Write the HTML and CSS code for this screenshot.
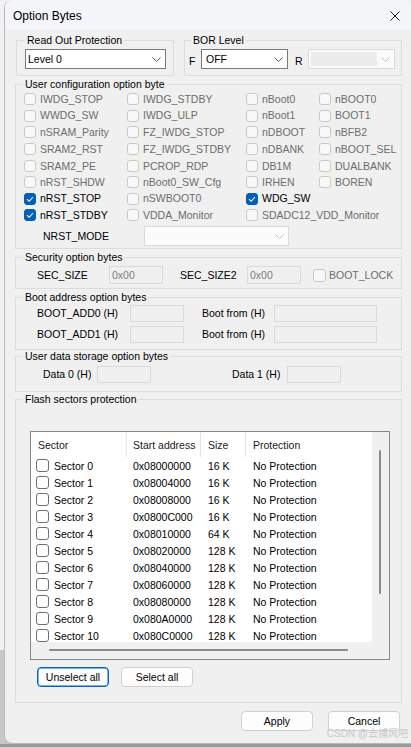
FILE: index.html
```html
<!DOCTYPE html>
<html>
<head>
<meta charset="utf-8">
<link rel="stylesheet" href="styles.css">
</head>
<body>
<div class="dialog">
  <div class="titlebar">
    <span class="title">Option Bytes</span>
    <svg class="close" width="10" height="10" viewBox="0 0 10 10"><path d="M0.5 0.5L9.5 9.5M9.5 0.5L0.5 9.5" stroke="#1b1b1b" stroke-width="1" fill="none"/></svg>
  </div>
  <div class="content">
    <div class="toprow">
      <div class="group rop">
        <div class="legend lg-rop">Read Out Protection</div>
        <div class="combo combo-rop"><span class="ctext">Level 0</span><svg width="9" height="5" viewBox="0 0 9 5"><polyline points="0.5,0.5 4.5,4.5 8.5,0.5" fill="none" stroke="#5f5f5f"/></svg></div>
      </div>
      <div class="group bor">
        <div class="legend lg-bor">BOR Level</div>
        <div class="bor-row">
          <span class="blabel bl-f">F</span>
          <div class="combo combo-bor"><span class="ctext ctext-off">OFF</span><svg width="9" height="5" viewBox="0 0 9 5"><polyline points="0.5,0.5 4.5,4.5 8.5,0.5" fill="none" stroke="#5f5f5f"/></svg></div>
          <span class="blabel bl-r">R</span>
          <div class="combo combo-dis"><span class="dis-inner"></span><svg width="9" height="5" viewBox="0 0 9 5"><polyline points="0.5,0.5 4.5,4.5 8.5,0.5" fill="none" stroke="#c2c2c2"/></svg></div>
        </div>
      </div>
    </div>

    <div class="group ucfg">
      <div class="legend lg">User configuration option byte</div>
      <div class="cfg-grid">
        <div class="item dis"><span class="cb"></span>IWDG_STOP</div>
        <div class="item dis"><span class="cb"></span>IWDG_STDBY</div>
        <div class="item dis"><span class="cb"></span>nBoot0</div>
        <div class="item dis"><span class="cb"></span>nBOOT0</div>

        <div class="item dis"><span class="cb"></span>WWDG_SW</div>
        <div class="item dis"><span class="cb"></span>IWDG_ULP</div>
        <div class="item dis"><span class="cb"></span>nBoot1</div>
        <div class="item dis"><span class="cb"></span>BOOT1</div>

        <div class="item dis"><span class="cb"></span>nSRAM_Parity</div>
        <div class="item dis"><span class="cb"></span>FZ_IWDG_STOP</div>
        <div class="item dis"><span class="cb"></span>nDBOOT</div>
        <div class="item dis"><span class="cb"></span>nBFB2</div>

        <div class="item dis"><span class="cb"></span>SRAM2_RST</div>
        <div class="item dis"><span class="cb"></span>FZ_IWDG_STDBY</div>
        <div class="item dis"><span class="cb"></span>nDBANK</div>
        <div class="item dis"><span class="cb"></span>nBOOT_SEL</div>

        <div class="item dis"><span class="cb"></span>SRAM2_PE</div>
        <div class="item dis"><span class="cb"></span>PCROP_RDP</div>
        <div class="item dis"><span class="cb"></span>DB1M</div>
        <div class="item dis"><span class="cb"></span>DUALBANK</div>

        <div class="item dis"><span class="cb"></span>nRST_SHDW</div>
        <div class="item dis"><span class="cb"></span>nBoot0_SW_Cfg</div>
        <div class="item dis"><span class="cb"></span>IRHEN</div>
        <div class="item dis"><span class="cb"></span>BOREN</div>

        <div class="item"><span class="cb on"><svg width="10" height="10" viewBox="0 0 10 10"><polyline points="2,5.2 4.2,7.3 8,3" fill="none" stroke="#fff" stroke-width="1.1"/></svg></span>nRST_STOP</div>
        <div class="item dis"><span class="cb"></span>nSWBOOT0</div>
        <div class="item"><span class="cb on"><svg width="10" height="10" viewBox="0 0 10 10"><polyline points="2,5.2 4.2,7.3 8,3" fill="none" stroke="#fff" stroke-width="1.1"/></svg></span>WDG_SW</div>
        <div class="item"></div>

        <div class="item"><span class="cb on"><svg width="10" height="10" viewBox="0 0 10 10"><polyline points="2,5.2 4.2,7.3 8,3" fill="none" stroke="#fff" stroke-width="1.1"/></svg></span>nRST_STDBY</div>
        <div class="item dis"><span class="cb"></span>VDDA_Monitor</div>
        <div class="item dis"><span class="cb"></span>SDADC12_VDD_Monitor</div>
        <div class="item"></div>
      </div>
      <div class="nrst-row">
        <span class="nrst-label">NRST_MODE</span>
        <div class="combo combo-nrst"><span></span><svg width="9" height="5" viewBox="0 0 9 5"><polyline points="0.5,0.5 4.5,4.5 8.5,0.5" fill="none" stroke="#c2c2c2"/></svg></div>
      </div>
    </div>

    <div class="group sec">
      <div class="legend lg">Security option bytes</div>
      <div class="row sec-row">
        <span class="lbl l-secsize">SEC_SIZE</span>
        <span class="field f54">0x00</span>
        <span class="lbl l-secsize2">SEC_SIZE2</span>
        <span class="field f54">0x00</span>
        <span class="cb cb-lock"></span><span class="dis-text">BOOT_LOCK</span>
      </div>
    </div>

    <div class="group boot">
      <div class="legend lg">Boot address option bytes</div>
      <div class="row boot-row first">
        <span class="lbl l-bootadd">BOOT_ADD0 (H)</span>
        <span class="field f54"></span>
        <span class="lbl l-bootfrom">Boot from (H)</span>
        <span class="field f103"></span>
      </div>
      <div class="row boot-row second">
        <span class="lbl l-bootadd">BOOT_ADD1 (H)</span>
        <span class="field f54"></span>
        <span class="lbl l-bootfrom">Boot from (H)</span>
        <span class="field f103"></span>
      </div>
    </div>

    <div class="group udata">
      <div class="legend lg">User data storage option bytes</div>
      <div class="row udata-row">
        <span class="lbl l-data0">Data 0 (H)</span>
        <span class="field f54"></span>
        <span class="lbl l-data1">Data 1 (H)</span>
        <span class="field f54"></span>
      </div>
    </div>

    <div class="group flash">
      <div class="legend lg">Flash sectors protection</div>
      <div class="list">
        <div class="lv-body">
          <div class="lv-head">
            <span class="hc c1">Sector</span>
            <span class="hc c2">Start address</span>
            <span class="hc c3">Size</span>
            <span class="hc c4">Protection</span>
          </div>
          <div class="lv-row"><span class="c1"><span class="rcb"></span>Sector 0</span><span class="c2">0x08000000</span><span class="c3">16 K</span><span class="c4">No Protection</span></div>
          <div class="lv-row"><span class="c1"><span class="rcb"></span>Sector 1</span><span class="c2">0x08004000</span><span class="c3">16 K</span><span class="c4">No Protection</span></div>
          <div class="lv-row"><span class="c1"><span class="rcb"></span>Sector 2</span><span class="c2">0x08008000</span><span class="c3">16 K</span><span class="c4">No Protection</span></div>
          <div class="lv-row"><span class="c1"><span class="rcb"></span>Sector 3</span><span class="c2">0x0800C000</span><span class="c3">16 K</span><span class="c4">No Protection</span></div>
          <div class="lv-row"><span class="c1"><span class="rcb"></span>Sector 4</span><span class="c2">0x08010000</span><span class="c3">64 K</span><span class="c4">No Protection</span></div>
          <div class="lv-row"><span class="c1"><span class="rcb"></span>Sector 5</span><span class="c2">0x08020000</span><span class="c3">128 K</span><span class="c4">No Protection</span></div>
          <div class="lv-row"><span class="c1"><span class="rcb"></span>Sector 6</span><span class="c2">0x08040000</span><span class="c3">128 K</span><span class="c4">No Protection</span></div>
          <div class="lv-row"><span class="c1"><span class="rcb"></span>Sector 7</span><span class="c2">0x08060000</span><span class="c3">128 K</span><span class="c4">No Protection</span></div>
          <div class="lv-row"><span class="c1"><span class="rcb"></span>Sector 8</span><span class="c2">0x08080000</span><span class="c3">128 K</span><span class="c4">No Protection</span></div>
          <div class="lv-row"><span class="c1"><span class="rcb"></span>Sector 9</span><span class="c2">0x080A0000</span><span class="c3">128 K</span><span class="c4">No Protection</span></div>
          <div class="lv-row"><span class="c1"><span class="rcb"></span>Sector 10</span><span class="c2">0x080C0000</span><span class="c3">128 K</span><span class="c4">No Protection</span></div>
        </div>
        <div class="vscroll"><span class="vthumb"></span></div>
        <div class="hscroll"><span class="hthumb"></span></div>
        <div class="corner"></div>
      </div>
      <div class="sel-row">
        <button class="btn btn-focus b-unsel">Unselect all</button>
        <button class="btn b-sel">Select all</button>
      </div>
    </div>

    <div class="bottom-row">
      <button class="btn b-apply">Apply</button>
      <button class="btn b-cancel">Cancel</button>
    </div>
  </div>
  <div class="watermark">CSDN @去捕风吧</div>
</div>
</body>
</html>
```

FILE: styles.css
```css
* { box-sizing: border-box; }

html, body {
  margin: 0;
  padding: 0;
  width: 411px;
  height: 747px;
  overflow: hidden;
}

body {
  font-family: "Liberation Sans", Arial, "Noto Sans CJK SC", sans-serif;
  font-size: 10.5px;
  color: #000;
  background: linear-gradient(to bottom, #f1f1f1 0, #f1f1f1 650px, #c8c8c8 650px, #c8c8c8 744px, #9a9a9a 744px);
}

.dialog {
  position: relative;
  margin-left: 4px;
  width: 407px;
  height: 744px;
  background: #f0f0f0;
  border-left: 1px solid #b9b9b9;
  border-bottom: 1px solid #b9b9b9;
  border-radius: 8px 8px 0 8px;
  overflow: hidden;
  display: flex;
  flex-direction: column;
}

.titlebar {
  height: 30px;
  flex: none;
  background: #f3f5f8;
  display: flex;
  align-items: center;
  justify-content: space-between;
  padding: 2px 11px 0 8px;
}

.title {
  font-size: 12px;
  line-height: 14px;
  color: #000;
}

.close { display: block; }

.content {
  padding: 10px 9px 0 10px;
  display: flex;
  flex-direction: column;
}

.group {
  border: 1px solid #dcdcdc;
}

.legend {
  margin-top: -7px;
  height: 13px;
  line-height: 13px;
  width: max-content;
  background: #f0f0f0;
  padding: 0 2px;
  color: #000;
  white-space: nowrap;
}

.lg { margin-left: 7px; }
.lg-rop { margin-left: 8px; }
.lg-bor { margin-left: 6px; }

/* top row */
.toprow {
  display: flex;
}

.rop {
  margin-left: 1px;
  width: 158px;
  height: 36px;
}

.bor {
  margin-left: 10px;
  width: 218px;
  height: 36px;
}

.combo {
  height: 20px;
  background: #fff;
  border: 1px solid #7a7a7a;
  display: flex;
  align-items: center;
  justify-content: space-between;
  padding: 0 4px 0 2px;
}

.combo svg { display: block; flex: none; }

.ctext { line-height: 14px; }
.ctext-off { padding-left: 2px; }

.combo-rop {
  margin: 2px 0 0 8px;
  width: 141px;
}

.bor-row {
  display: flex;
  align-items: center;
  margin-top: 2px;
  padding-left: 4px;
}

.blabel {
  padding-top: 3px;
  line-height: 14px;
}

.bl-f { width: 12px; }
.bl-r { width: 13px; margin-left: 7px; }

.combo-bor { width: 87px; }

.combo-dis {
  width: 87px;
  border-color: #dadada;
  background: #fbfbfb;
  padding: 2px 4px 2px 2px;
  align-items: stretch;
}

.combo-dis svg { align-self: center; }

.dis-inner {
  width: 66px;
  background: #ececec;
}

/* user configuration */
.ucfg {
  margin-top: 8px;
  height: 165px;
}

.cfg-grid {
  display: grid;
  grid-template-columns: 103px 119px 73px 1fr;
  grid-template-rows: 16px 17px 16px 18px 16px 16px 17px 16px;
  padding-left: 8px;
}

.item {
  display: flex;
  align-items: center;
  white-space: nowrap;
  color: #000;
  line-height: 13px;
}

.item.dis { color: #6d6d6d; }

.cb {
  flex: none;
  width: 12px;
  height: 12px;
  border: 1px solid #c8c8c8;
  border-radius: 3px;
  background: #f8f8f8;
  margin-right: 4px;
  display: flex;
  align-items: center;
  justify-content: center;
}

.cb.on {
  background: #005fb8;
  border-color: #005fb8;
}

.cb svg { display: block; }

.nrst-row {
  display: flex;
  align-items: center;
  margin-top: 3px;
  padding-left: 27px;
}

.nrst-label { width: 101px; }

.combo-nrst {
  width: 145px;
  border-color: #dadada;
  background: #fbfbfb;
}

/* rows with fields */
.row {
  display: flex;
  align-items: center;
  white-space: nowrap;
}

.lbl {
  flex: none;
  line-height: 13px;
}

.field {
  flex: none;
  display: flex;
  align-items: center;
  height: 18px;
  border: 1px solid #dadada;
  background: #f0f0f0;
  color: #7b7b7b;
  padding-left: 2px;
}

.f54 { width: 54px; }
.f103 { width: 103px; }

.sec {
  margin-top: 8px;
  height: 32px;
}

.sec-row { margin-top: 2px; height: 18px; }

.l-secsize { margin-left: 21px; width: 72px; }
.l-secsize2 { margin-left: 17px; width: 67px; }

.cb-lock {
  width: 13px;
  height: 13px;
  margin-left: 12px;
  margin-right: 3px;
}

.dis-text { color: #6d6d6d; }

.boot {
  margin-top: 8px;
  height: 53px;
}

.boot-row .field { height: 17px; }
.boot-row.first { margin-top: 1px; }
.boot-row.second { margin-top: 4px; }

.l-bootadd { margin-left: 21px; width: 93px; }
.l-bootfrom { margin-left: 18px; width: 72px; }

.udata {
  margin-top: 6px;
  height: 36px;
}

.udata-row { margin-top: 3px; }
.udata-row .field { height: 17px; }

.l-data0 { margin-left: 27px; width: 54px; }
.l-data1 { margin-left: 81px; width: 55px; }

/* flash */
.flash {
  margin-top: 7px;
  height: 304px;
}

.list {
  margin: 25px 0 0 14px;
  width: 360px;
  height: 229px;
  border: 1px solid #878787;
  display: grid;
  grid-template-columns: 341px 17px;
  grid-template-rows: 210px 17px;
}

.lv-body {
  background: #fff;
  overflow: hidden;
}

.lv-head {
  display: grid;
  grid-template-columns: 96px 74px 45px 1fr;
  height: 25px;
}

.hc {
  display: flex;
  align-items: center;
  white-space: nowrap;
  color: #1a1a1a;
}

.lv-head .c1, .lv-head .c2, .lv-head .c3 {
  border-right: 1px solid #e5e5e5;
}

.lv-head .c1 { padding-left: 7px; }
.lv-head .c2 { padding-left: 6px; }
.lv-head .c3 { padding-left: 7px; }
.lv-head .c4 { padding-left: 7px; }

.lv-row {
  display: grid;
  grid-template-columns: 96px 74px 45px 1fr;
  height: 17px;
  align-items: center;
  white-space: nowrap;
}

.lv-row .c1 {
  display: flex;
  align-items: center;
  padding-left: 5px;
}

.lv-row .c2 { padding-left: 6px; }
.lv-row .c3 { padding-left: 7px; }
.lv-row .c4 { padding-left: 7px; }

.rcb {
  flex: none;
  width: 13px;
  height: 13px;
  border: 1px solid #707070;
  border-radius: 3px;
  background: #fff;
  margin-right: 5px;
}

.vscroll {
  background: #f0f0f0;
  padding: 18px 0 0 7px;
}

.vthumb {
  display: block;
  width: 2px;
  height: 144px;
  background: #8a8a8a;
  border-radius: 1px;
}

.hscroll {
  background: #f0f0f0;
  padding: 7px 0 0 18px;
}

.hthumb {
  display: block;
  width: 299px;
  height: 2px;
  background: #8a8a8a;
  border-radius: 1px;
}

.corner { background: #f0f0f0; }

.sel-row {
  display: flex;
  margin-top: 7px;
  padding-left: 21px;
}

.btn {
  font-family: "Liberation Sans", Arial, sans-serif;
  font-size: 10.5px;
  color: #000;
  width: 72px;
  height: 20px;
  padding: 0;
  margin: 0;
  background: #fdfdfd;
  border: 1px solid #d0d0d0;
  border-radius: 4px;
  line-height: 16px;
}

.btn-focus {
  border-color: #0067c0;
  box-shadow: inset 0 0 0 0.5px #0067c0;
}

.b-sel { margin-left: 12px; }

.bottom-row {
  display: flex;
  justify-content: flex-end;
  margin-top: 8px;
  padding-right: 2px;
}

.b-cancel { margin-left: 15px; }

.watermark {
  position: absolute;
  right: 3px;
  bottom: 4px;
  font-family: "Liberation Sans", "Noto Sans CJK SC", sans-serif;
  font-size: 10px;
  line-height: 11px;
  color: #c9c9c9;
  white-space: nowrap;
}
```
